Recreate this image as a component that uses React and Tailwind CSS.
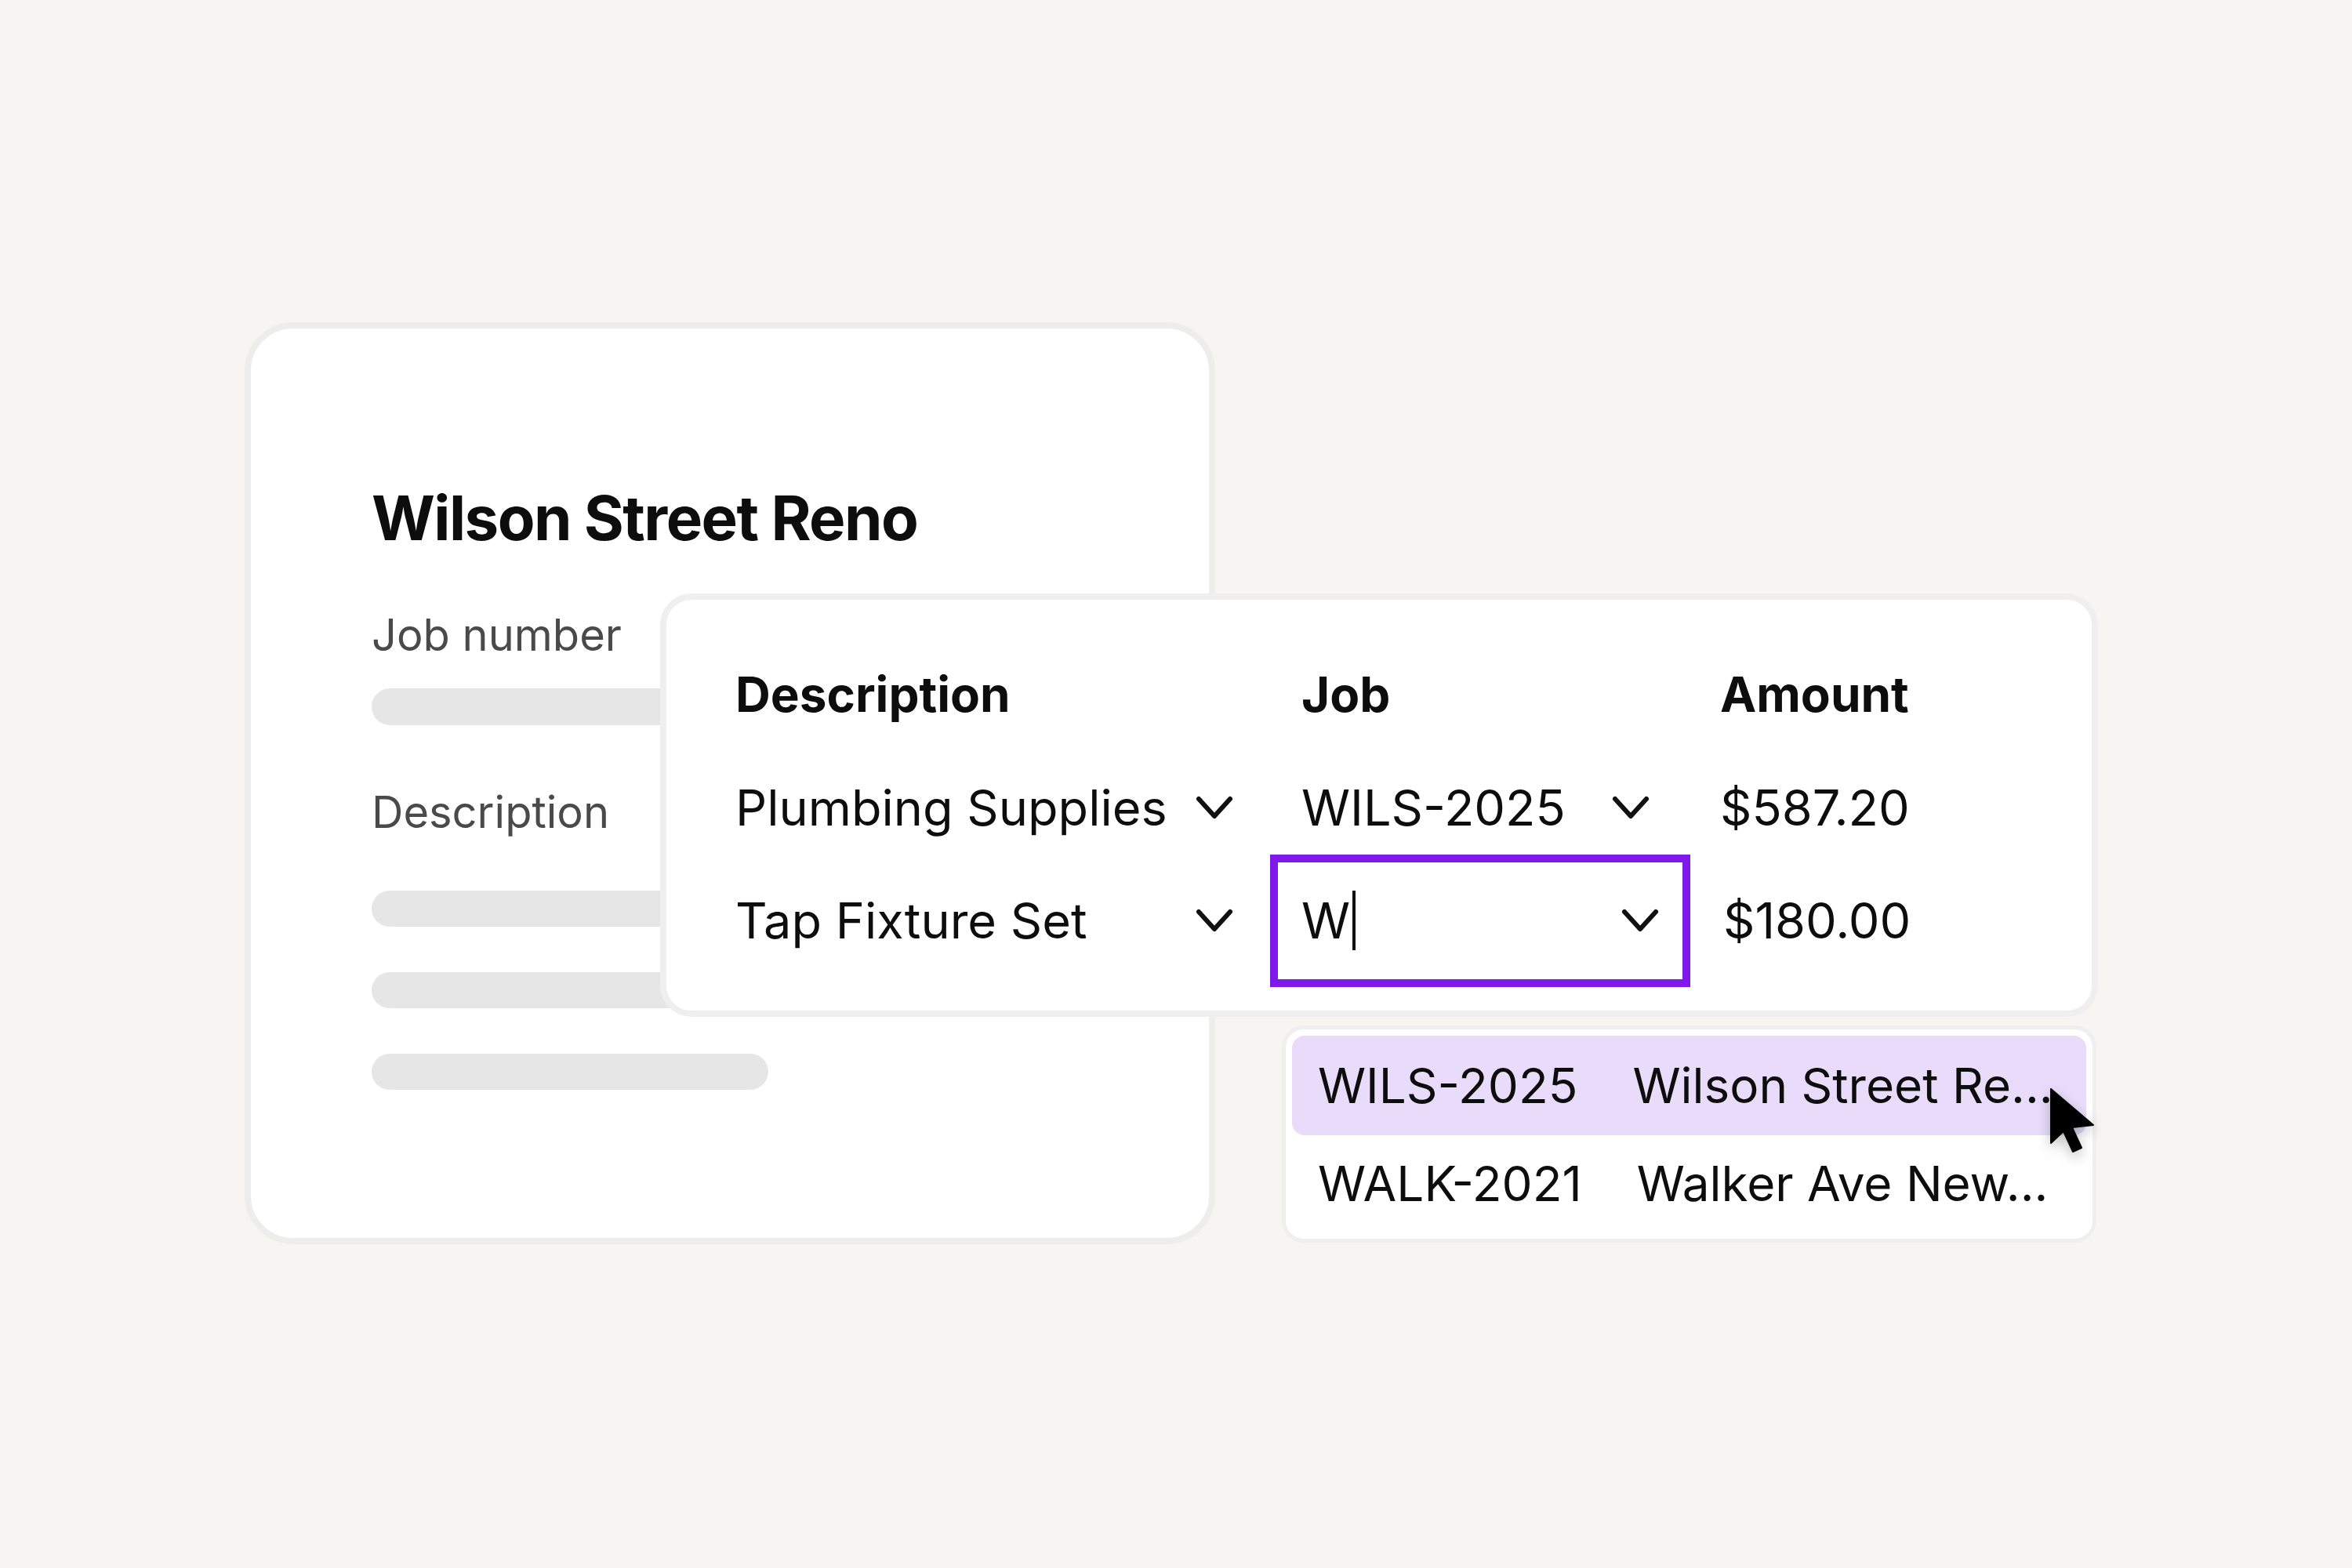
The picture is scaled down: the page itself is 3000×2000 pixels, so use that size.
import React from 'react';

const Chevron = ({ className = '' }) => (
    <svg viewBox="0 0 48 31" className={`w-[48px] h-[31px] shrink-0 ${className}`} fill="none">
        <path d="M4 4 L24 26 L44 4" stroke="#111111" strokeWidth="6" strokeLinecap="round" strokeLinejoin="round" />
    </svg>
);

const Pointer = () => (
    <svg viewBox="0 0 60 84" className="w-[60px] h-[84px] drop-shadow-[0_6px_8px_rgba(0,0,0,0.25)]">
        <path d="M1 1 L1 70 L17 55 L29 81 L40 76 L28 50 L55 47 Z" fill="#000000" stroke="#000000" strokeWidth="2" strokeLinejoin="round" />
    </svg>
);

export default function App() {
    const options = [
        { code: 'WILS-2025', name: 'Wilson Street Re...', active: true },
        { code: 'WALK-2021', name: 'Walker Ave New...', active: false },
    ];

    return (
        <div className="relative w-[3000px] h-[2000px] overflow-hidden bg-[#f6f5f1] font-['Inter','Liberation_Sans',sans-serif] text-[#0d0d0d]">
            {/* Background form card */}
            <div className="ml-[312px] pt-[411px]">
                <div className="w-[1238px] h-[1176px] rounded-[62px] border-[8px] border-[#ededeb] bg-white pl-[154px] pt-[203px]">
                    <h1 className="text-[78px] leading-none font-bold tracking-[-0.02em]">Wilson Street Reno</h1>
                    <div className="mt-[82px] text-[56px] leading-none text-[#4a4a4a]">Job number</div>
                    <div className="mt-[40px] h-[47px] w-[900px] rounded-full bg-[#e6e6e6]"></div>
                    <div className="mt-[83px] text-[56px] leading-none text-[#4a4a4a]">Description</div>
                    <div className="mt-[72px] flex flex-col gap-[58px]">
                        <div className="h-[46px] w-[900px] rounded-full bg-[#e6e6e6]"></div>
                        <div className="h-[46px] w-[900px] rounded-full bg-[#e6e6e6]"></div>
                        <div className="h-[46px] w-[506px] rounded-full bg-[#e6e6e6]"></div>
                    </div>
                </div>
            </div>

            {/* Line items table */}
            <div className="absolute left-[842px] top-[757px] w-[1834px] h-[540px] rounded-[40px] border-[8px] border-[#efefef] bg-white pl-[88px] pt-[49px]">
                <div className="grid grid-cols-[682px_536px_1fr] grid-rows-[144px_144px_144px] items-center">
                    <div className="text-[62px] leading-none font-bold">Description</div>
                    <div className="pl-[40px] text-[62px] leading-none font-bold">Job</div>
                    <div className="pl-[38px] text-[62px] leading-none font-bold">Amount</div>

                    <div className="flex items-center justify-between pr-[47px] text-[63px] leading-none">
                        <span>Plumbing Supplies</span>
                        <Chevron />
                    </div>
                    <div className="flex items-center justify-between pl-[40px] pr-[52px] text-[63px] leading-none">
                        <span>WILS-2025</span>
                        <Chevron />
                    </div>
                    <div className="pl-[38px] text-[63px] leading-none">$587.20</div>

                    <div className="flex items-center justify-between pr-[47px] text-[63px] leading-none">
                        <span>Tap Fixture Set</span>
                        <Chevron />
                    </div>
                    <div className="flex h-[144px] items-center">
                        <div className="flex h-[169px] w-[536px] shrink-0 items-center justify-between border-[10px] border-[#7e19ea] bg-white pl-[30px] pr-[30px] text-[63px] leading-none">
                            <span className="flex items-center">
                                W<span className="ml-[3px] inline-block h-[76px] w-[4px] bg-[#111111]"></span>
                            </span>
                            <Chevron />
                        </div>
                    </div>
                    <div className="pl-[42px] text-[63px] leading-none">$180.00</div>
                </div>
            </div>

            {/* Job dropdown */}
            <div className="absolute left-[1635px] top-[1308px] w-[1039px] rounded-[28px] border-[5px] border-[#efefef] bg-white p-[8px]">
                {options.map((opt) => (
                    <div
                        key={opt.code}
                        className={`flex items-center gap-[70px] whitespace-nowrap rounded-[16px] pl-[33px] text-[62px] leading-none ${
                            opt.active ? 'h-[127px] bg-[#e9dcfa]' : 'h-[124px]'
                        }`}
                    >
                        <span className="shrink-0">{opt.code}</span>
                        <span className="shrink-0">{opt.name}</span>
                    </div>
                ))}
            </div>

            {/* Mouse pointer */}
            <div className="absolute left-[2615px] top-[1388px]">
                <Pointer />
            </div>
        </div>
    );
}
